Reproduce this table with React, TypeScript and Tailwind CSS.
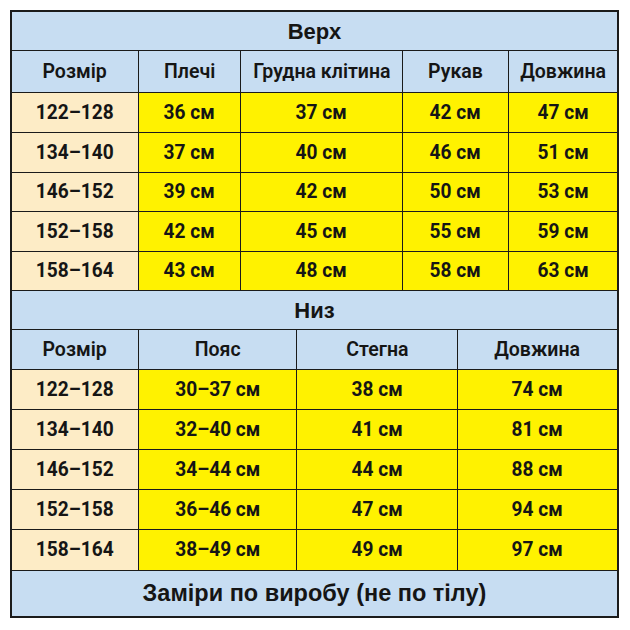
const topCols = ["Плечі", "Грудна клітина", "Рукав", "Довжина"];
const topRows = [
  ["122–128", "36 см", "37 см", "42 см", "47 см"],
  ["134–140", "37 см", "40 см", "46 см", "51 см"],
  ["146–152", "39 см", "42 см", "50 см", "53 см"],
  ["152–158", "42 см", "45 см", "55 см", "59 см"],
  ["158–164", "43 см", "48 см", "58 см", "63 см"],
];
const topHeights = ["h-[40px]", "h-[40px]", "h-[39px]", "h-[40px]", "h-[39px]"];

const bottomCols = ["Пояс", "Стегна", "Довжина"];
const bottomRows = [
  ["122–128", "30–37 см", "38 см", "74 см"],
  ["134–140", "32–40 см", "41 см", "81 см"],
  ["146–152", "34–44 см", "44 см", "88 см"],
  ["152–158", "36–46 см", "47 см", "94 см"],
  ["158–164", "38–49 см", "49 см", "97 см"],
];
const bottomHeights = ["h-[40px]", "h-[40px]", "h-[40px]", "h-[40px]", "h-[41px]"];

function Cell({ children, last, tone, h }: { children: React.ReactNode; last?: boolean; tone: "blue" | "cream" | "yellow"; h: string }) {
  const bg = tone === "blue" ? "bg-[#c7ddf2]" : tone === "cream" ? "bg-[#fdecc6]" : "bg-[#fff200]";
  return (
    <div className={`${h} ${bg} flex items-center justify-center border-b-[1.5px] border-[#1b1b1b] ${last ? "" : "border-r-[1.5px]"}`}>
      {children}
    </div>
  );
}

const Head = ({ t }: { t: string }) => (
  <span className="inline-block whitespace-nowrap text-[21px] font-semibold scale-x-[0.93]">{t}</span>
);
const Val = ({ t }: { t: string }) => (
  <span className="inline-block whitespace-nowrap text-[21px] font-bold scale-x-[0.91]">{t}</span>
);

export default function App() {
  return (
    <div className="w-[630px] h-[630px] bg-white pl-[10px] pt-[10px] font-['Roboto',sans-serif] text-[#151515]">
      <div className="w-[609px] border-2 border-[#1b1b1b]">
        <div className="h-[39px] bg-[#c7ddf2] border-b-[1.5px] border-[#1b1b1b] flex items-center justify-center font-['Liberation_Sans',sans-serif] text-[22px] font-bold">Верх</div>
        <div className="grid grid-cols-[127px_102px_162px_106px_1fr]">
          <Cell tone="blue" h="h-[42px]"><Head t="Розмір" /></Cell>
          {topCols.map((c, i) => (
            <Cell key={c} tone="blue" h="h-[42px]" last={i === topCols.length - 1}><Head t={c} /></Cell>
          ))}
          {topRows.map((r, ri) =>
            r.map((v, ci) => (
              <Cell key={ri + "-" + ci} tone={ci === 0 ? "cream" : "yellow"} h={topHeights[ri]} last={ci === r.length - 1}>
                <Val t={v} />
              </Cell>
            ))
          )}
        </div>
        <div className="h-[39px] bg-[#c7ddf2] border-b-[1.5px] border-[#1b1b1b] flex items-center justify-center font-['Liberation_Sans',sans-serif] text-[22px] font-bold">Низ</div>
        <div className="grid grid-cols-[127px_158px_161px_1fr]">
          <Cell tone="blue" h="h-[40px]"><Head t="Розмір" /></Cell>
          {bottomCols.map((c, i) => (
            <Cell key={c} tone="blue" h="h-[40px]" last={i === bottomCols.length - 1}><Head t={c} /></Cell>
          ))}
          {bottomRows.map((r, ri) =>
            r.map((v, ci) => (
              <Cell key={ri + "-" + ci} tone={ci === 0 ? "cream" : "yellow"} h={bottomHeights[ri]} last={ci === r.length - 1}>
                <Val t={v} />
              </Cell>
            ))
          )}
        </div>
        <div className="h-[45px] bg-[#c7ddf2] flex items-center justify-center font-['Liberation_Sans',sans-serif] text-[23.5px] font-bold">Заміри по виробу (не по тілу)</div>
      </div>
    </div>
  );
}
